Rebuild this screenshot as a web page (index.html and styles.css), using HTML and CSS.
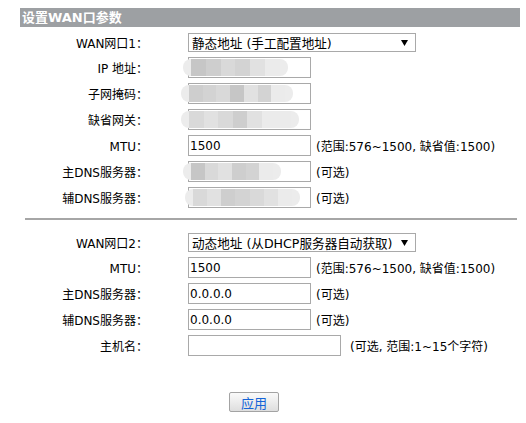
FILE: index.html
```html
<!DOCTYPE html>
<html lang="zh-CN">
<head>
    <meta charset="UTF-8">
    <title>设置WAN口参数</title>
    <link rel="stylesheet" href="styles.css">
</head>
<body>
    <div class="panel">
        <div class="title">设置WAN口参数</div>

        <!-- WAN1 -->
        <div class="form">
            <div class="row sel-row">
                <label>WAN网口1：</label>
                <div class="ctrl">
                    <div class="select wide">
                        <span>静态地址 (手工配置地址)</span>
                        <svg class="arrow" width="7" height="6" viewBox="0 0 7 6"><path d="M0 0h7L3.5 6z" fill="#000"/></svg>
                    </div>
                </div>
            </div>
            <div class="row">
                <label>IP 地址：</label>
                <div class="ctrl">
                    <div class="field">
                        <input type="text" value="">
                        <div class="mosaic m-ip"><i class="a"></i><i class="b"></i><i class="c"></i><i class="d"></i><i class="e"></i><i class="f"></i></div>
                    </div>
                </div>
            </div>
            <div class="row">
                <label>子网掩码：</label>
                <div class="ctrl">
                    <div class="field">
                        <input type="text" value="">
                        <div class="mosaic m-mask"><i class="b"></i><i class="d"></i><i class="c"></i><i class="a"></i><i class="e"></i><i class="d"></i><i class="f"></i></div>
                    </div>
                </div>
            </div>
            <div class="row">
                <label>缺省网关：</label>
                <div class="ctrl">
                    <div class="field">
                        <input type="text" value="">
                        <div class="mosaic m-gw"><i class="c"></i><i class="e"></i><i class="c"></i><i class="b"></i><i class="e"></i><i class="f"></i><i class="f"></i></div>
                    </div>
                </div>
            </div>
            <div class="row">
                <label>MTU：</label>
                <div class="ctrl">
                    <input type="text" value="1500">
                    <span class="hint">(范围:576~1500, 缺省值:1500)</span>
                </div>
            </div>
            <div class="row">
                <label>主DNS服务器：</label>
                <div class="ctrl">
                    <div class="field">
                        <input type="text" value="">
                        <div class="mosaic m-dns1"><i class="a"></i><i class="c"></i><i class="e"></i><i class="b"></i><i class="d"></i><i class="f"></i></div>
                    </div>
                    <span class="hint">(可选)</span>
                </div>
            </div>
            <div class="row">
                <label>辅DNS服务器：</label>
                <div class="ctrl">
                    <div class="field">
                        <input type="text" value="">
                        <div class="mosaic m-dns2"><i class="c"></i><i class="e"></i><i class="b"></i><i class="d"></i><i class="c"></i><i class="e"></i><i class="f"></i></div>
                    </div>
                    <span class="hint">(可选)</span>
                </div>
            </div>
        </div>

        <hr class="sep">

        <!-- WAN2 -->
        <div class="form">
            <div class="row sel-row">
                <label>WAN网口2：</label>
                <div class="ctrl">
                    <div class="select wide">
                        <span>动态地址 (从DHCP服务器自动获取)</span>
                        <svg class="arrow" width="7" height="6" viewBox="0 0 7 6"><path d="M0 0h7L3.5 6z" fill="#000"/></svg>
                    </div>
                </div>
            </div>
            <div class="row">
                <label>MTU：</label>
                <div class="ctrl">
                    <input type="text" value="1500">
                    <span class="hint">(范围:576~1500, 缺省值:1500)</span>
                </div>
            </div>
            <div class="row">
                <label>主DNS服务器：</label>
                <div class="ctrl">
                    <input type="text" value="0.0.0.0">
                    <span class="hint">(可选)</span>
                </div>
            </div>
            <div class="row">
                <label>辅DNS服务器：</label>
                <div class="ctrl">
                    <input type="text" value="0.0.0.0">
                    <span class="hint">(可选)</span>
                </div>
            </div>
            <div class="row">
                <label>主机名：</label>
                <div class="ctrl">
                    <input type="text" class="long" value="">
                    <span class="hint far">(可选, 范围:1~15个字符)</span>
                </div>
            </div>
        </div>

        <div class="actions">
            <button type="button">应用</button>
        </div>
    </div>
</body>
</html>
```

FILE: styles.css
```css
body {
    margin: 0;
    background: #ffffff;
    color: #000000;
    font-family: "DejaVu Sans", "Noto Sans CJK SC", sans-serif;
    font-size: 12px;
}

.panel {
    width: 500px;
    padding: 8px 0 0 20px;
}

.title {
    height: 19px;
    line-height: 19px;
    background: #9da0a3;
    color: #ffffff;
    font-weight: bold;
    font-size: 13px;
    padding-left: 2px;
}

.form {
    display: flex;
    flex-direction: column;
    gap: 5px;
    margin-top: 6px;
}

.row {
    display: grid;
    grid-template-columns: 128px auto;
    column-gap: 40px;
    align-items: center;
    height: 21px;
}

.row.sel-row {
    height: 19px;
}

.row label {
    text-align: right;
    white-space: nowrap;
}

.ctrl {
    display: flex;
    align-items: center;
}

input {
    box-sizing: border-box;
    width: 123px;
    height: 21px;
    margin: 0;
    padding: 0 1px;
    border: 1px solid #a9a9a9;
    font-family: "DejaVu Sans", sans-serif;
    font-size: 12px;
    color: #000000;
    background: #ffffff;
    outline: none;
}

input.long {
    width: 153px;
}

.hint {
    margin-left: 5px;
    white-space: nowrap;
}

.hint.far {
    margin-left: 9px;
}

.select {
    box-sizing: border-box;
    height: 19px;
    border: 1px solid #a9a9a9;
    display: flex;
    align-items: center;
    justify-content: space-between;
    padding: 0 7px 0 3px;
    background: #ffffff;
    white-space: nowrap;
}

.select.wide {
    width: 228px;
}

.select span {
    font-size: 12.6px;
}

.arrow {
    display: block;
    flex: none;
}

/* mosaic blurred values */
.field {
    position: relative;
}

.mosaic {
    position: absolute;
    top: 2px;
    left: -5px;
    height: 17px;
    display: flex;
    overflow: hidden;
    border-radius: 8px;
    background: #ececec;
    padding: 0 8px;
    filter: blur(0.6px);
}

.mosaic i {
    display: block;
    width: 15px;
    height: 100%;
}

.mosaic i.a { background: #c6c6c6; }
.mosaic i.b { background: #cecece; }
.mosaic i.c { background: #d9d9d9; }
.mosaic i.d { background: #d3d3d3; }
.mosaic i.e { background: #e1e1e1; }
.mosaic i.f { background: #ebebeb; }

.m-ip { width: 89px; }
.m-mask { width: 96px; left: -7px; }
.m-gw { width: 102px; left: -7px; }
.m-dns1 { width: 82px; }
.m-dns2 { width: 99px; left: -3px; }

.sep {
    margin: 10px 3px 13px 5px;
    border: none;
    border-top: 2px solid #a6a6a6;
    height: 0;
}

.actions {
    display: flex;
    margin-top: 36px;
    padding-left: 209px;
}

button {
    width: 50px;
    height: 20px;
    padding: 0;
    border: 1px solid #a3a3a3;
    border-radius: 2px;
    background: linear-gradient(#fafafa, #dedede);
    color: #1464d8;
    font-family: "Noto Sans CJK SC", sans-serif;
    font-size: 13px;
    cursor: pointer;
}
```
